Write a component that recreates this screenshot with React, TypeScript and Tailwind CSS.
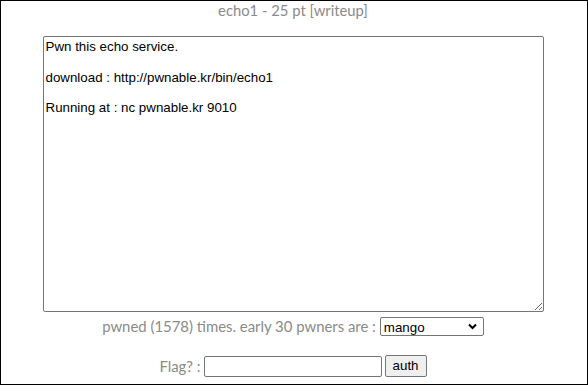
import React from "react";

export default function App() {
  return (
    <div className="w-[588px] h-[386px] bg-white">
      <div
        className="w-[588px] h-[385px] border border-black bg-white flex flex-col items-center pr-[2px] text-[#8a8a8a]"
        style={{ fontFamily: "Lato, 'Open Sans', sans-serif" }}
      >
        <div className="text-[14.8px] leading-[18px] h-[18px]">echo1 - 25 pt [writeup]</div>
        <textarea
          readOnly
          className="mt-[17px] w-[501px] h-[276px] border border-[#767676] rounded-[2px] px-[2px] py-[2px] text-black text-[13.33px] outline-none resize-y"
          style={{ fontFamily: "'Liberation Sans', Arial, sans-serif", lineHeight: "15.3px" }}
          defaultValue={"Pwn this echo service.\n\ndownload : http://pwnable.kr/bin/echo1\n\nRunning at : nc pwnable.kr 9010"}
        />
        <div className="mt-[5px] h-[19px] flex items-center text-[14.9px] leading-[19px]">
          <span>pwned (1578) times. early 30 pwners are :</span>
          <div className="relative ml-[4px] w-[104px] h-[19px]">
            <select
              className="appearance-none w-full h-full border border-[#767676] rounded-[2px] bg-white text-black text-[13.33px] pl-[3px] outline-none"
              style={{ fontFamily: "'Liberation Sans', Arial, sans-serif" }}
              defaultValue="mango"
            >
              <option value="mango">mango</option>
            </select>
            <svg
              className="absolute right-[7px] top-[6px] pointer-events-none"
              width="9"
              height="7"
              viewBox="0 0 9 7"
            >
              <path d="M1 1.5 L4.5 5 L8 1.5" fill="none" stroke="black" strokeWidth="2" />
            </svg>
          </div>
        </div>
        <div className="mt-[19px] h-[22px] flex items-center text-[14.9px]">
          <span>Flag? :</span>
          <input
            className="ml-[3px] w-[178px] h-[21px] border border-[#767676] rounded-[2px] outline-none bg-white"
            type="text"
          />
          <button
            className="ml-[3px] w-[42px] h-[22px] border border-[#767676] rounded-[2px] bg-[#efefef] text-black text-[13.33px]"
            style={{ fontFamily: "'Liberation Sans', Arial, sans-serif" }}
          >
            auth
          </button>
        </div>
      </div>
    </div>
  );
}
